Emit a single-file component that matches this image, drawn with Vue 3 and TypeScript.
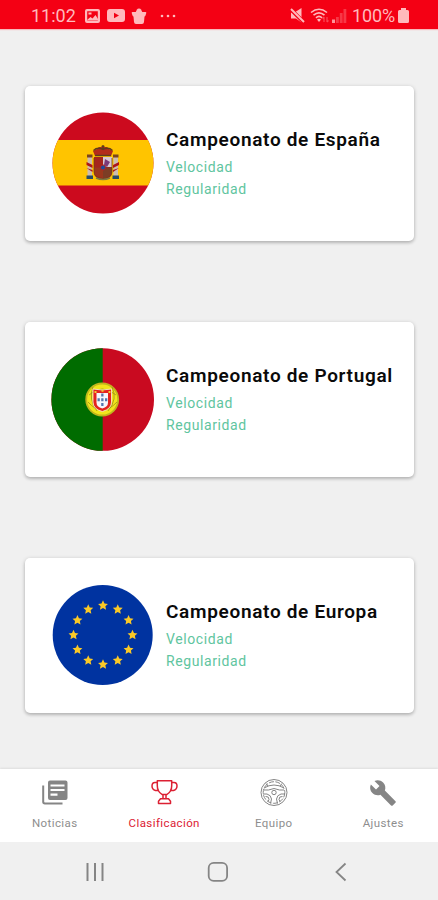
<script setup lang="ts">
type Flag = 'es' | 'pt' | 'eu'
type Tab = 'news' | 'cup' | 'wheel' | 'tool'

interface Championship {
  flag: Flag
  title: string
}

const championships: Championship[] = [
  { flag: 'es', title: 'Campeonato de España' },
  { flag: 'pt', title: 'Campeonato de Portugal' },
  { flag: 'eu', title: 'Campeonato de Europa' },
]
const modes: string[] = ['Velocidad', 'Regularidad']

const tabs: { id: Tab; label: string; active?: boolean }[] = [
  { id: 'news', label: 'Noticias' },
  { id: 'cup', label: 'Clasificación', active: true },
  { id: 'wheel', label: 'Equipo' },
  { id: 'tool', label: 'Ajustes' },
]

const stars = Array.from({ length: 12 }, (_, i) => {
  const a = (i * Math.PI) / 6
  return `translate(${(52 + 29.5 * Math.sin(a)).toFixed(2)} ${(52 - 29.5 * Math.cos(a)).toFixed(2)})`
})
const star = Array.from({ length: 10 }, (_, i) => {
  const r = i % 2 ? 2.5 : 5.2
  const a = (i * Math.PI) / 5
  return `${(r * Math.sin(a)).toFixed(2)},${(-r * Math.cos(a)).toFixed(2)}`
}).join(' ')
</script>

<template>
  <div class="screen">
    <header class="status">
      <div class="status-left">
        <span class="clock">11:02</span>
        <svg class="s-pic" width="15" height="14" viewBox="0 0 15 14">
          <path fill="currentColor" fill-rule="evenodd" d="M2 0h11q2 0 2 2v10q0 2-2 2H2q-2 0-2-2V2q0-2 2-2zM2.200 2.200v9.600h10.600V2.200z" />
          <path fill="currentColor" d="M2 11l3.500-3 2 1.500L10.500 6l2.500 4v1.500H2zM3.500 3.500h3v2h-3z" />
        </svg>
        <svg class="s-tube" width="18" height="13" viewBox="0 0 18 13">
          <path fill="currentColor" fill-rule="evenodd" d="M3 0h12q3 0 3 3v7q0 3-3 3H3q-3 0-3-3V3q0-3 3-3zM7 3.700v5.600l5-2.800z" />
        </svg>
        <svg class="s-bag" width="16" height="16" viewBox="0 0 16 16">
          <path fill="currentColor" d="M1.500 4h13q1 0 .8 1l-.8 2.500q-.5 1-1 1l-.5 5.500q-.2 2-2 2H5q-1.800 0-2-2L2.500 8.500q-.5 0-1-1L.7 5q-.2-1 .8-1z" />
          <path fill="currentColor" d="M4.500 4.500L6 1.500Q6.500 .5 8 .5t2 1l1.500 3z" />
        </svg>
        <svg class="s-dots" width="16" height="4" viewBox="0 0 16 4" fill="currentColor">
          <circle cx="2" cy="2" r="1.300" /><circle cx="8" cy="2" r="1.300" /><circle cx="14" cy="2" r="1.300" />
        </svg>
      </div>
      <div class="status-right">
        <svg width="15" height="15" viewBox="0 0 15 15">
          <path fill="currentColor" d="M1 4.500h3.500L11.500 0v14.500L6 10.500H1z" />
          <path d="M0 .5l14 14" stroke="#f40014" stroke-width="3.800" />
          <path d="M1 1l13 13" stroke="currentColor" stroke-width="2" />
        </svg>
        <svg class="s-wifi" width="19" height="15" viewBox="0 0 19 15" fill="none" stroke="currentColor" stroke-width="1.600">
          <path d="M1 4.500Q9 -2 17 4.500M3.500 7.200Q9 2.500 14.500 7.200M6 9.800Q9 7 12 9.800" />
          <path fill="currentColor" stroke="none" d="M7 11.500q2-1.500 4 0L9 14z" />
          <path opacity=".4" d="M14 14V9m-1.500 1.500L14 9M17 9v5m1.500-1.500L17 14" stroke-width="1.200" />
        </svg>
        <svg class="s-signal" width="15" height="15" viewBox="0 0 15 15" fill="currentColor">
          <path d="M0 11.500h3V15H0z" opacity=".8" />
          <path d="M4 9h2.800v6H4zM7.800 5h2.800v10H7.800zM11.500 1h2.800v14h-2.800z" opacity=".3" />
        </svg>
        <span class="battery-text">100%</span>
        <svg class="s-batt" width="11" height="15" viewBox="0 0 11 15">
          <path fill="currentColor" d="M3 0h5v2h1.500Q11 2 11 3.500v10q0 1.500-1.500 1.500h-8Q0 15 0 13.500v-10Q0 2 1.500 2H3z" />
        </svg>
      </div>
    </header>

    <main class="list">
      <article v-for="c in championships" :key="c.flag" class="card">
        <svg v-if="c.flag === 'es'" class="flag" viewBox="0 0 104 104">
          <defs><clipPath id="clip-es"><circle cx="52" cy="52" r="50.500" /></clipPath></defs>
          <g clip-path="url(#clip-es)">
            <path fill="#cc0a1e" d="M0 0h104v104H0z" />
            <path fill="#ffc400" d="M0 29h104v45.500H0z" />
          </g>
          <g class="arms">
            <path d="M36.500 46h4.500v20h-4.500zM62.500 46h4.500v20h-4.500z" fill="#cdbcae" />
            <path d="M35.500 51l6 3v3l-6-3zM68 51l-6 3v3l6-3zM35.500 57l6 2v2zM68 57l-6 2v2z" fill="#ad1519" />
            <path d="M36 43.500h5.500v3H36zM62 43.500h5.500v3H62z" fill="#7b451e" />
            <path d="M35.500 64.500h6.500v3.500h-6.500zM61.500 64.500H68V68h-6.500z" fill="#284c65" />
            <path d="M43 46h18v15q0 7-9 7t-9-7z" fill="#a5251c" />
            <path d="M52 46h9v10h-9z" fill="#d8c8d3" />
            <path d="M54 48l5 3-3 5-3-2z" fill="#7b3a79" />
            <path d="M43 56.500h9V67q-8-1-9-6z" fill="#9c371c" />
            <path d="M52 56.500h9V61q-1 5-9 7z" fill="#7c3d25" />
            <circle cx="52" cy="56.500" r="2.600" fill="#204b9a" stroke="#b72020" />
            <path d="M44 45l-2-5 4-2 2-2h8l2 2 4 2-2 5z" fill="#b32b1a" />
            <path d="M42.500 39.500q4-4 9.500-1 5.500-3 9.500 1M52 34v4M50.500 35.500h3M44 44.500h16" fill="none" stroke="#5f3c1b" stroke-width="1.300" />
            <path d="M43 47v14q0 6 9 7 9-1 9-7V47" fill="none" stroke="#6d3a1c" stroke-width=".8" />
            <path d="M45 67q7 3 14 0" fill="none" stroke="#7d7840" stroke-width="1.500" />
          </g>
        </svg>
        <svg v-else-if="c.flag === 'pt'" class="flag" viewBox="0 0 104 104">
          <defs><clipPath id="clip-pt"><circle cx="51.700" cy="52.500" r="51.300" /></clipPath></defs>
          <g clip-path="url(#clip-pt)">
            <path fill="#c90a20" d="M0 0h104v104H0z" />
            <path fill="#006c00" d="M0 0h51.700v104H0z" />
          </g>
          <circle cx="51.200" cy="52.500" r="16" fill="#f2e51b" stroke="#c1b51c" stroke-width="1.800" />
          <path d="M38 48q13-12 27 0M37 55q14 16 29 0M42 40q-5 12 4 24M61 40q6 12-4 24" fill="none" stroke="#9b8e19" stroke-width=".8" />
          <path d="M42 42q9.200 2 18.500 0V55q0 7-9.200 9.500Q42 62 42 55z" fill="#e4231d" stroke="#f8f2dd" stroke-width=".8" />
          <path d="M45.500 46h11.500v9.500q0 4.500-5.700 6-5.800-1.500-5.800-6z" fill="#f6f7fa" />
          <g fill="#5477ad">
            <path d="M50.200 46.500h2.300v3h-2.300zM50.200 51.200h2.300v3h-2.300zM50.200 56h2.300v3h-2.300zM46.500 51.200h2.300v3h-2.300zM54 51.200h2.300v3H54z" />
          </g>
          <path d="M43.500 44h2v2h-2zM57.500 44h2v2h-2zM50.500 43h2v1.800h-2z" fill="#f0cc31" />
        </svg>
        <svg v-else class="flag" viewBox="0 0 104 104">
          <circle cx="51.700" cy="52" r="50" fill="#0033a0" />
          <polygon v-for="s in stars" :key="s" :points="star" :transform="s" fill="#fbc926" />
        </svg>
        <div class="info">
          <h2 class="title">{{ c.title }}</h2>
          <p v-for="(m, i) in modes" :key="m" :class="['mode', { second: i === 1 }]">{{ m }}</p>
        </div>
      </article>
    </main>

    <nav class="tabs">
      <div v-for="t in tabs" :key="t.id" :class="['tab', { active: t.active }]">
        <svg v-if="t.id === 'news'" class="icon" viewBox="0 0 28 28">
          <path fill="currentColor" fill-rule="evenodd" d="M9 1.500h15.500q2 0 2 2v15.500q0 2-2 2H9q-2 0-2-2V3.500q0-2 2-2zM9.500 5.500v2h14v-2zM9.500 10v2h14v-2zM9.500 14.500v2.200h7v-2.200z" />
          <path d="M2.200 6.500v16.300q0 1.700 1.700 1.700H21.500" fill="none" stroke="currentColor" stroke-width="2" />
        </svg>
        <svg v-else-if="t.id === 'cup'" class="icon" viewBox="0 0 28 28" fill="none" stroke="currentColor" stroke-width="1.500" stroke-linejoin="round">
          <path d="M7.300 1.800h14.400v5q0 6-5 8.800h-4.400q-5-2.800-5-8.800z" />
          <path d="M7.500 3.500H5Q2 3.500 2 7t3.500 4.500h3M21.500 3.500H24q3 0 3 3.500t-3.500 4.500h-3" />
          <path d="M13 15.700v4h3v-4M10.500 19.800h8l2 2.400v2.200h-12v-2.200z" />
        </svg>
        <svg v-else-if="t.id === 'wheel'" class="icon" viewBox="0 0 28 28" fill="none" stroke="currentColor" stroke-width="1">
          <circle cx="14" cy="13.500" r="13" />
          <circle cx="14" cy="13.500" r="10.800" stroke-dasharray="5 1.500" />
          <circle cx="14" cy="13.500" r="2.200" />
          <path d="M4 9q10-6 20 0M4 11h4.500q5.500-3 11 0H24M3 15h4q4 1 4.500 5l-1 4.500M25 15h-4q-4 1-4.500 5l1 4.500M5.500 17.500q3.500-.5 3.500 3l-1 2M22.500 17.500q-3.500-.5-3.500 3l1 2M6 4.500l2 2.500M22 4.500L20 7" />
        </svg>
        <svg v-else class="icon" viewBox="0 0 24 24">
          <path fill="currentColor" d="M22.700 19l-9.100-9.100c.9-2.300.4-5-1.500-6.900-2-2-5-2.400-7.400-1.300L9 6 6 9 1.600 4.700C.4 7.100.9 10.100 2.900 12.100c1.900 1.900 4.600 2.400 6.900 1.500l9.100 9.100c.4.4 1 .4 1.400 0l2.300-2.300c.5-.4.5-1.100.1-1.400z" />
        </svg>
        <span class="label">{{ t.label }}</span>
      </div>
    </nav>

    <footer class="sysnav">
      <div class="sys">
        <svg width="20" height="20" viewBox="0 0 20 20"><path d="M2.500 1v18M10 1v18M17.500 1v18" stroke="currentColor" stroke-width="2" /></svg>
      </div>
      <div class="sys">
        <svg width="22" height="22" viewBox="0 0 22 22"><rect x="1.700" y="1.900" width="18.400" height="18" rx="5" fill="none" stroke="currentColor" stroke-width="1.800" /></svg>
      </div>
      <div class="sys">
        <svg width="20" height="20" viewBox="0 0 20 20"><path d="M14.500 1.500L5.500 10l9 8.500" fill="none" stroke="currentColor" stroke-width="1.800" /></svg>
      </div>
    </footer>
  </div>
</template>

<style>
body {
  background: #f0f0f0;
}
</style>

<style scoped>
.screen {
  width: 438px;
  height: 900px;
  display: flex;
  flex-direction: column;
  overflow: hidden;
  background: #f0f0f0;
  font-family: Roboto, 'Liberation Sans', sans-serif;
}
svg {
  display: block;
  flex: none;
}
.status {
  height: 29px;
  flex: none;
  box-sizing: border-box;
  padding: 2px 29px 0 31px;
  display: flex;
  align-items: center;
  justify-content: space-between;
  background: #f40014;
  color: #ffb9bc;
  box-shadow: 0 1px 1px #f8b9bc;
}
.status-left,
.status-right {
  display: flex;
  align-items: center;
}
.clock,
.battery-text {
  font-size: 18px;
  line-height: 24px;
}
.clock {
  width: 54px;
}
.s-tube {
  margin-left: 7px;
}
.s-bag {
  margin-left: 6px;
}
.s-dots {
  margin-left: 13px;
}
.s-wifi {
  margin-left: 5px;
}
.s-signal {
  margin-left: 3px;
}
.battery-text {
  width: 44px;
  margin-left: 5px;
  letter-spacing: -0.1px;
}
.s-batt {
  margin-left: 2px;
}
.list {
  flex: 1;
  padding: 57px 24.500px 0 25px;
  display: flex;
  flex-direction: column;
  gap: 81px;
}
.card {
  height: 155px;
  flex: none;
  box-sizing: border-box;
  padding: 25px 0 0 26px;
  display: flex;
  align-items: flex-start;
  border-radius: 5px;
  background: #fff;
  box-shadow: 0 1px 4px rgba(0, 0, 0, 0.2), 0 2px 3px rgba(0, 0, 0, 0.12);
}
.flag {
  width: 104px;
  height: 104px;
}
.info {
  padding: 17px 0 0 11px;
}
.title,
.mode {
  margin: 0;
  white-space: nowrap;
}
.title {
  font-size: 19px;
  line-height: 24px;
  font-weight: 600;
  color: #0a0a0a;
  letter-spacing: 0.68px;
}
.mode {
  margin-top: 5px;
  font-size: 14px;
  line-height: 20px;
  letter-spacing: 0.6px;
  color: #5fc5a0;
}
.mode.second {
  margin-top: 2px;
}
.tabs {
  height: 73px;
  flex: none;
  display: grid;
  grid-template-columns: repeat(4, 1fr);
  background: #fff;
  box-shadow: 0 -1px 2px rgba(0, 0, 0, 0.08);
}
.tab {
  padding-top: 10px;
  display: flex;
  flex-direction: column;
  align-items: center;
  gap: 9px;
  color: #858585;
}
.tab.active {
  color: #dc2033;
}
.icon {
  width: 28px;
  height: 28px;
}
.label {
  font-size: 11.500px;
  line-height: 15px;
  letter-spacing: 0.4px;
  color: #8e8e8e;
}
.active .label {
  color: #dc2033;
}
.sysnav {
  height: 58px;
  flex: none;
  box-sizing: border-box;
  padding: 2px 36px 0 34px;
  display: grid;
  grid-template-columns: repeat(3, 1fr);
  align-items: center;
  background: #f0f0f0;
  color: #858585;
}
.sys {
  display: flex;
  justify-content: center;
}
</style>
